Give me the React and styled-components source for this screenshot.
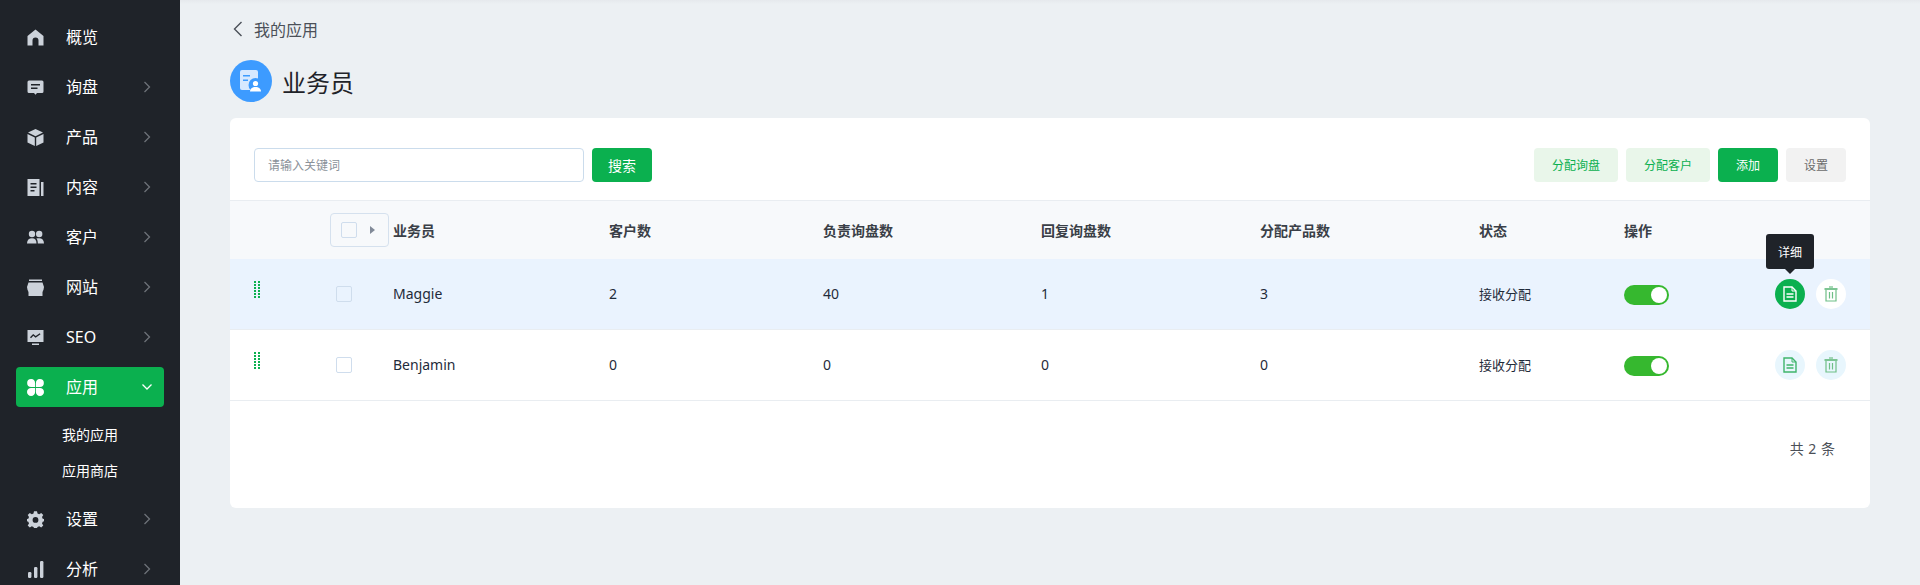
import React from 'react'
import styled, {createGlobalStyle} from "styled-components";

const GlobalStyle = createGlobalStyle`
  html, body {
    margin: 0;
    padding: 0;
    height: 100%;
    overflow: hidden;
    background: #ecf0f3;
    font-family: "Noto Sans", "Noto Sans CJK SC", sans-serif;
  }
  #root {
    height: 100%;
  }
  * {
    box-sizing: border-box;
  }
`;

const GREEN = '#0bb04f';

const Page = styled.div`
  display: flex;
  width: 1920px;
  height: 585px;
  overflow: hidden;
`;

const Sidebar = styled.aside`
  width: 180px;
  flex-shrink: 0;
  height: 585px;
  overflow: hidden;
  background: #1f2329;
  padding: 12px 16px 0;
`;

const NavItem = styled.div`
  height: ${props => props.$active ? '40px' : '50px'};
  margin: ${props => props.$active ? '5px 0' : '0'};
  display: flex;
  align-items: center;
  border-radius: 4px;
  background: ${props => props.$active ? GREEN : 'transparent'};
  color: #fff;
  font-size: 16px;
  padding-left: 11px;
  padding-right: 11px;
`;

const NavIcon = styled.span`
  width: 17px;
  height: 17px;
  display: flex;
  margin-right: 22px;
  color: ${props => props.$active ? '#fff' : '#ccd2da'};
`;

const NavLabel = styled.span`
  flex: 1;
  line-height: 1;
`;

const SubMenu = styled.div`
  display: flex;
  flex-direction: column;
  padding: 5px 0 5px 46px;
`;

const SubItem = styled.div`
  height: 36px;
  line-height: 36px;
  color: #fff;
  font-size: 14px;
`;

const Main = styled.main`
  flex: 1;
  padding: 0 50px 0 50px;
  background: linear-gradient(#e6e9ed 0, #ecf0f3 4px);
`;

const Breadcrumb = styled.div`
  height: 60px;
  display: flex;
  align-items: center;
  gap: 10px;
  color: #4b5058;
  font-size: 16px;
  padding: 0 0 2px 2px;
`;

const TitleRow = styled.div`
  display: flex;
  align-items: center;
  gap: 10px;
  height: 42px;
  margin-bottom: 16px;
`;

const TitleBadge = styled.div`
  width: 42px;
  height: 42px;
  border-radius: 50%;
  background: #3d9bff;
  display: flex;
  align-items: center;
  justify-content: center;
`;

const Title = styled.h1`
  margin: 0;
  font-size: 24px;
  font-weight: 400;
  color: #1f2329;
`;

const Card = styled.section`
  background: #fff;
  border-radius: 6px;
  height: 390px;
`;

const Toolbar = styled.div`
  height: 83px;
  padding: 30px 24px 0;
  display: flex;
  justify-content: space-between;
  align-items: flex-start;
  border-bottom: 1px solid #e9edf1;
`;

const ToolGroup = styled.div`
  display: flex;
  gap: 8px;
`;

const SearchInput = styled.input`
  width: 330px;
  height: 34px;
  border: 1px solid #cbdcec;
  border-radius: 4px;
  padding: 0 13px;
  font-size: 12px;
  font-family: inherit;
  outline: none;
  &::placeholder {
    color: #8a9199;
  }
`;

const variants = {
  primary: {bg: GREEN, fg: '#fff'},
  soft: {bg: '#e9f6ea', fg: '#0bb04f'},
  muted: {bg: '#f2f2f2', fg: '#6b6b6b'},
};

const Button = styled.button`
  height: 34px;
  width: ${props => props.$width}px;
  border: none;
  border-radius: 4px;
  padding: 0;
  font-family: inherit;
  font-size: ${props => props.$size || 12}px;
  background: ${props => variants[props.$variant].bg};
  color: ${props => variants[props.$variant].fg};
`;

const GridRow = styled.div`
  display: grid;
  grid-template-columns: 100px 63px 216px 214px 218px 219px 219px 145px 145px 1fr;
  align-items: center;
  height: ${props => props.$height}px;
  background: ${props => props.$bg || '#fff'};
  border-bottom: ${props => props.$noBorder ? 'none' : '1px solid #e9edf1'};
  color: #1f2b3a;
  font-size: 14px;
`;

const HeadCell = styled.div`
  font-size: 14px;
  font-weight: 600;
  color: #3a3f47;
`;

const Cell = styled.div`
  font-size: ${props => props.$size || 14}px;
  padding-bottom: 2px;
`;

const DragCol = styled.div`
  padding-left: 24px;
  display: flex;
  padding-bottom: 8px;
`;

const CheckCol = styled.div`
  padding-left: 6px;
`;

const Checkbox = styled.span`
  display: block;
  width: 16px;
  height: 16px;
  border: 1px solid #cfdded;
  border-radius: 2px;
  background: ${props => props.$tinted ? 'transparent' : '#fff'};
`;

const SelectBox = styled.div`
  width: 59px;
  height: 34px;
  border: 1px solid #d5e1ee;
  border-radius: 4px;
  display: flex;
  align-items: center;
  gap: 13px;
  padding-left: 10px;
`;

const Caret = styled.span`
  width: 0;
  height: 0;
  border-left: 5px solid #818a98;
  border-top: 4px solid transparent;
  border-bottom: 4px solid transparent;
`;

const SwitchCol = styled.div`
  padding-top: 2px;
`;

const Switch = styled.span`
  display: block;
  position: relative;
  width: 45px;
  height: 20px;
  border-radius: 10px;
  background: #36b82f;
  &::after {
    content: "";
    position: absolute;
    top: 2px;
    right: 2px;
    width: 16px;
    height: 16px;
    border-radius: 50%;
    background: #fff;
  }
`;

const Actions = styled.div`
  display: flex;
  justify-content: flex-end;
  gap: 11px;
  padding-right: 24px;
`;

const RoundButton = styled.span`
  position: relative;
  width: 30px;
  height: 30px;
  border-radius: 50%;
  display: flex;
  align-items: center;
  justify-content: center;
  background: ${props => props.$bg};
  color: ${props => props.$fg};
`;

const Tooltip = styled.div`
  position: absolute;
  left: -9px;
  top: -45px;
  width: 48px;
  height: 35px;
  border-radius: 3px;
  background: #1f2329;
  color: #fff;
  font-size: 12px;
  display: flex;
  align-items: center;
  justify-content: center;
  &::after {
    content: "";
    position: absolute;
    left: 19px;
    bottom: -5px;
    border-left: 5px solid transparent;
    border-right: 5px solid transparent;
    border-top: 5px solid #1f2329;
  }
`;

const Pagination = styled.div`
  display: flex;
  justify-content: flex-end;
  padding: 37px 35px 0 0;
  font-size: 14px;
  word-spacing: 1px;
  color: #4b5058;
`;

const Svg = ({size = 17, children, ...rest}) => (
    <svg width={size} height={size} viewBox="0 0 17 17" fill="currentColor" {...rest}>{children}</svg>
);

const HomeIcon = () => <Svg><path fillRule="evenodd" d="M8.5 0.5 16.5 7V16.5H11.5V11.5A3 3 0 0 0 5.5 11.5V16.5H0.5V7Z"/></Svg>;
const ChatIcon = () => <Svg><path fillRule="evenodd" d="M2 1.5H15A1.5 1.5 0 0 1 16.5 3V12.5A1.5 1.5 0 0 1 15 14H10L8.5 15.8 7 14H2A1.5 1.5 0 0 1 .5 12.5V3A1.5 1.5 0 0 1 2 1.5ZM4 5V6.4H13V5ZM4 8.5V9.9H10.5V8.5Z"/></Svg>;
const BoxIcon = () => <Svg><path d="M8.5 0 16 3.6 8.5 7.2 1 3.6Z"/><path d="M.5 5 7.8 8.5V17L.5 13.5Z"/><path d="M16.5 5 9.2 8.5V17L16.5 13.5Z"/></Svg>;
const DocIcon = () => <Svg><path fillRule="evenodd" d="M.5 0H12.5V17H.5ZM3.5 4V5.5H9.5V4ZM3.5 7.5V9H9.5V7.5ZM3.5 11V12.5H7.5V11Z"/><path d="M14 3H16.5V17H14Z"/></Svg>;
const UsersIcon = () => <Svg><circle cx="5" cy="5" r="3.2"/><circle cx="12.2" cy="5" r="3.2"/><path d="M0 14.5C0 11 2 9.2 5 9.2S9.5 11 9.5 14.5Z"/><path d="M10.8 14.5C10.8 12 10.4 10.6 9.3 9.6 10 9.3 11 9.2 12.2 9.2 15 9.2 17 11 17 14.5Z"/></Svg>;
const StoreIcon = () => <Svg><path d="M2 .5H15V2H2Z"/><path d="M1.5 3.5H15.5L17 8A2.2 2.2 0 0 1 0 8Z"/><path d="M1.5 10.8C3.5 11.5 5 11.2 6 10.4 7.5 11.4 9.5 11.4 11 10.4 12 11.2 13.5 11.5 15.5 10.8V17H1.5Z"/></Svg>;
const MonitorIcon = () => <Svg><path fillRule="evenodd" d="M.5 1H16.5V13H.5ZM3 8.2 4 9.2 6.3 6.8 8.6 8.8 13.5 5.2 12.7 4.2 8.7 7.1 6.2 5 Z"/><path d="M5 14.5H12V16H5Z"/></Svg>;
const AppsIcon = () => <Svg><path d="M4.2 0A4.2 4.2 0 0 1 8.1 4.2V8.1H4.2A4.05 4.05 0 0 1 4.2 0Z"/><path d="M12.8 0A4.05 4.05 0 0 1 12.8 8.1H8.9V4.2A4.2 4.2 0 0 1 12.8 0Z"/><path d="M4.2 8.9H8.1V12.8A4.05 4.05 0 1 1 4.2 8.9Z"/><path d="M8.9 8.9H12.8A4.05 4.05 0 1 1 8.9 12.8Z"/></Svg>;
const GearIcon = () => <Svg><path fillRule="evenodd" d="M7 .3H10L10.5 2.6 12.2 3.3 14.2 2 16.3 4.1 15 6.1 15.7 7.8 17 8V10.2L15.7 10.7 15 12.4 16.3 14.4 14.2 16.5 12.2 15.2 10.5 15.9 10 17H7L6.5 15.9 4.8 15.2 2.8 16.5 .7 14.4 2 12.4 1.3 10.7 0 10.2V8L1.3 7.8 2 6.1 .7 4.1 2.8 2 4.8 3.3 6.5 2.6ZM8.5 6A2.9 2.9 0 1 0 8.5 11.8 2.9 2.9 0 1 0 8.5 6Z"/></Svg>;
const BarsIcon = () => <Svg><rect x="1" y="11" width="3.4" height="6" rx="1.2"/><rect x="7" y="6" width="3.4" height="11" rx="1.2"/><rect x="13" y="0" width="3.4" height="17" rx="1.2"/></Svg>;

const Chevron = ({open}) => (
    <svg width="12" height="14" viewBox="0 0 12 14" fill="none" stroke={open ? '#fff' : '#6d7278'} strokeWidth="1.3">
        {open ? <path d="M1.5 4.5 6 9 10.5 4.5"/> : <path d="M3.5 2 8.5 7 3.5 12"/>}
    </svg>
);

const BackArrow = () => (
    <svg width="12" height="18" viewBox="0 0 12 18" fill="none" stroke="#4b5058" strokeWidth="1.4">
        <path d="M9.5 2 2.5 9 9.5 16"/>
    </svg>
);

const GripDots = () => (
    <svg width="7" height="18" viewBox="0 0 7 18" fill={GREEN}>
        {[0, 3, 6, 9, 12, 15].map(y => (
            <g key={y}>
                <rect x="0" y={y} width="2" height="2"/>
                <rect x="4" y={y} width="2" height="2"/>
            </g>
        ))}
    </svg>
);

const PersonDoc = () => (
    <svg width="22" height="23" viewBox="0 0 22 23">
        <rect x="0" y="0" width="18" height="20" rx="2" fill="#d6e8ff"/>
        <path d="M3 5H10V6.6H3ZM3 9.5H8V11H3Z" fill="#3d9bff"/>
        <circle cx="15.5" cy="15" r="7" fill="#3d9bff"/>
        <circle cx="15.5" cy="13.5" r="2.6" fill="#fff"/>
        <path d="M10 21.5C10 18.8 12.2 17 15.5 17S21 18.8 21 21.5Z" fill="#fff"/>
    </svg>
);

const FileIcon = () => (
    <svg width="14" height="16" viewBox="0 0 14 16" fill="none" stroke="currentColor" strokeWidth="1.4">
        <path d="M1 1H9L13 5V15H1Z"/>
        <path d="M3.5 8H10.5M3.5 11H10.5" strokeWidth="1.6"/>
        <path d="M9 1V5H13" strokeWidth="1"/>
    </svg>
);

const TrashIcon = () => (
    <svg width="14" height="16" viewBox="0 0 14 16" fill="none" stroke="currentColor" strokeWidth="1.2">
        <path d="M0.5 3H13.5" strokeWidth="1.8"/>
        <path d="M5 1H9" strokeWidth="1.2"/>
        <path d="M2 4V15H12V4"/>
        <path d="M5.5 6V12.5M8.5 6V12.5"/>
    </svg>
);

const navTop = [
    {label: '概览', icon: <HomeIcon/>, noArrow: true},
    {label: '询盘', icon: <ChatIcon/>},
    {label: '产品', icon: <BoxIcon/>},
    {label: '内容', icon: <DocIcon/>},
    {label: '客户', icon: <UsersIcon/>},
    {label: '网站', icon: <StoreIcon/>},
    {label: 'SEO', icon: <MonitorIcon/>},
];

const columns = ['业务员', '客户数', '负责询盘数', '回复询盘数', '分配产品数', '状态', '操作'];

const rows = [
    {name: 'Maggie', customers: 2, inquiries: 40, replies: 1, products: 3, hover: true},
    {name: 'Benjamin', customers: 0, inquiries: 0, replies: 0, products: 0},
];

export default function App() {
    return (
        <Page>
            <GlobalStyle/>
            <Sidebar>
                {navTop.map(item => (
                    <NavItem key={item.label}>
                        <NavIcon>{item.icon}</NavIcon>
                        <NavLabel>{item.label}</NavLabel>
                        {!item.noArrow && <Chevron/>}
                    </NavItem>
                ))}
                <NavItem $active>
                    <NavIcon $active><AppsIcon/></NavIcon>
                    <NavLabel>应用</NavLabel>
                    <Chevron open/>
                </NavItem>
                <SubMenu>
                    <SubItem>我的应用</SubItem>
                    <SubItem>应用商店</SubItem>
                </SubMenu>
                <NavItem>
                    <NavIcon><GearIcon/></NavIcon>
                    <NavLabel>设置</NavLabel>
                    <Chevron/>
                </NavItem>
                <NavItem>
                    <NavIcon><BarsIcon/></NavIcon>
                    <NavLabel>分析</NavLabel>
                    <Chevron/>
                </NavItem>
            </Sidebar>
            <Main>
                <Breadcrumb>
                    <BackArrow/>
                    我的应用
                </Breadcrumb>
                <TitleRow>
                    <TitleBadge><PersonDoc/></TitleBadge>
                    <Title>业务员</Title>
                </TitleRow>
                <Card>
                    <Toolbar>
                        <ToolGroup>
                            <SearchInput placeholder="请输入关键词"/>
                            <Button $variant="primary" $width={60} $size={14}>搜索</Button>
                        </ToolGroup>
                        <ToolGroup>
                            <Button $variant="soft" $width={84}>分配询盘</Button>
                            <Button $variant="soft" $width={84}>分配客户</Button>
                            <Button $variant="primary" $width={60}>添加</Button>
                            <Button $variant="muted" $width={60}>设置</Button>
                        </ToolGroup>
                    </Toolbar>
                    <GridRow $height={58} $bg="#f7f9fb" $noBorder>
                        <div/>
                        <SelectBox>
                            <Checkbox $tinted/>
                            <Caret/>
                        </SelectBox>
                        {columns.map(c => <HeadCell key={c}>{c}</HeadCell>)}
                        <div/>
                    </GridRow>
                    {rows.map(row => (
                        <GridRow key={row.name} $height={71} $bg={row.hover ? '#eaf3fe' : '#fff'}>
                            <DragCol><GripDots/></DragCol>
                            <CheckCol><Checkbox $tinted={row.hover}/></CheckCol>
                            <Cell>{row.name}</Cell>
                            <Cell>{row.customers}</Cell>
                            <Cell>{row.inquiries}</Cell>
                            <Cell>{row.replies}</Cell>
                            <Cell>{row.products}</Cell>
                            <Cell $size={13}>接收分配</Cell>
                            <SwitchCol><Switch/></SwitchCol>
                            <Actions>
                                <RoundButton $bg={row.hover ? GREEN : '#e8f6fd'} $fg={row.hover ? '#fff' : '#3fb56b'}>
                                    <FileIcon/>
                                    {row.hover && <Tooltip>详细</Tooltip>}
                                </RoundButton>
                                <RoundButton $bg={row.hover ? '#fff' : '#e8f6fd'} $fg="#6fbf87">
                                    <TrashIcon/>
                                </RoundButton>
                            </Actions>
                        </GridRow>
                    ))}
                    <Pagination>共 2 条</Pagination>
                </Card>
            </Main>
        </Page>
    )
}
